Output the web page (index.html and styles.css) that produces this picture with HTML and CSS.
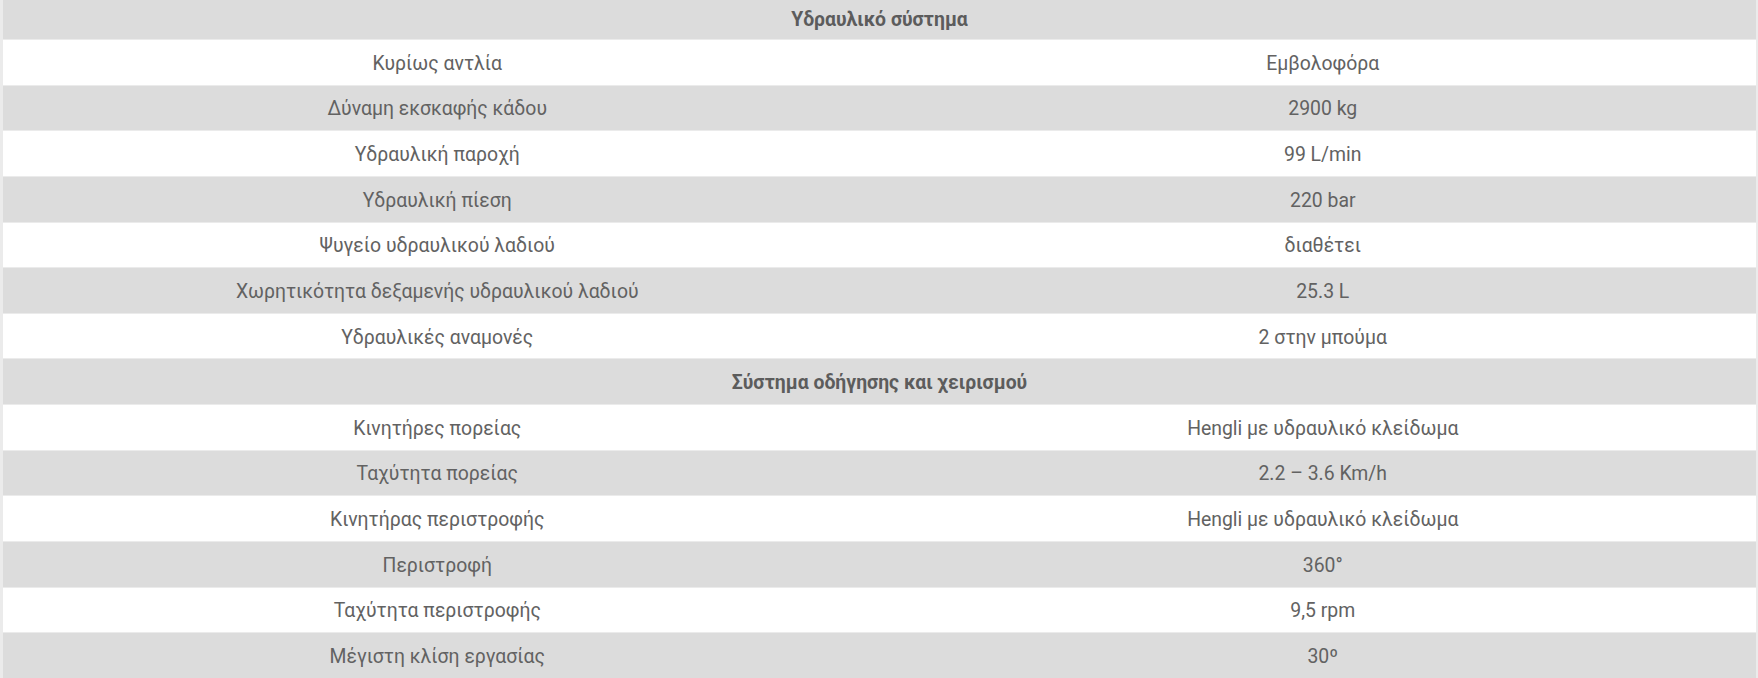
FILE: index.html
```html
<!DOCTYPE html>
<html lang="el">
<head>
<meta charset="utf-8">
<title>Προδιαγραφές</title>
<link rel="stylesheet" href="styles.css">
</head>
<body>
<div class="specs">
  <div class="row section first"><div class="head">Υδραυλικό σύστημα</div></div>
  <div class="row odd"><div class="label">Κυρίως αντλία</div><div class="value">Εμβολοφόρα</div></div>
  <div class="row even"><div class="label">Δύναμη εκσκαφής κάδου</div><div class="value">2900 kg</div></div>
  <div class="row odd"><div class="label">Υδραυλική παροχή</div><div class="value">99 L/min</div></div>
  <div class="row even"><div class="label">Υδραυλική πίεση</div><div class="value">220 bar</div></div>
  <div class="row odd"><div class="label">Ψυγείο υδραυλικού λαδιού</div><div class="value">διαθέτει</div></div>
  <div class="row even"><div class="label">Χωρητικότητα δεξαμενής υδραυλικού λαδιού</div><div class="value">25.3 L</div></div>
  <div class="row odd"><div class="label">Υδραυλικές αναμονές</div><div class="value">2 στην μπούμα</div></div>
  <div class="row section"><div class="head">Σύστημα οδήγησης και χειρισμού</div></div>
  <div class="row odd"><div class="label">Κινητήρες πορείας</div><div class="value">Hengli με υδραυλικό κλείδωμα</div></div>
  <div class="row even"><div class="label">Ταχύτητα πορείας</div><div class="value">2.2 – 3.6 Km/h</div></div>
  <div class="row odd"><div class="label">Κινητήρας περιστροφής</div><div class="value">Hengli με υδραυλικό κλείδωμα</div></div>
  <div class="row even"><div class="label">Περιστροφή</div><div class="value">360°</div></div>
  <div class="row odd"><div class="label">Ταχύτητα περιστροφής</div><div class="value">9,5 rpm</div></div>
  <div class="row even"><div class="label">Μέγιστη κλίση εργασίας</div><div class="value">30º</div></div>
</div>
</body>
</html>
```

FILE: styles.css
```css
html, body {
  margin: 0;
  padding: 0;
  background: #ebebeb;
}
body {
  padding: 0 2px 0 3px;
  font-family: Roboto, "Noto Sans", sans-serif;
  color: #626262;
}
.specs {
  display: flex;
  flex-direction: column;
  font-size: 19.4px;
  line-height: 22px;
}
.row {
  box-sizing: border-box;
  display: grid;
  grid-template-columns: 1fr 1fr;
  align-items: center;
  height: 45.64px;
  border-top: 1px solid #ebebeb;
  padding-top: 3px;
}
.row.first {
  height: 39px;
  border-top: 0;
  padding-top: 0;
}
.section, .even { background: #dcdcdc; }
.odd { background: #ffffff; }
.head {
  grid-column: 1 / -1;
  text-align: center;
  font-weight: 700;
  color: #5c5c5c;
}
.label, .value {
  text-align: center;
}
.label { padding: 0 14px 0 6px; }
.value { padding: 0 6px 0 16px; }
```
